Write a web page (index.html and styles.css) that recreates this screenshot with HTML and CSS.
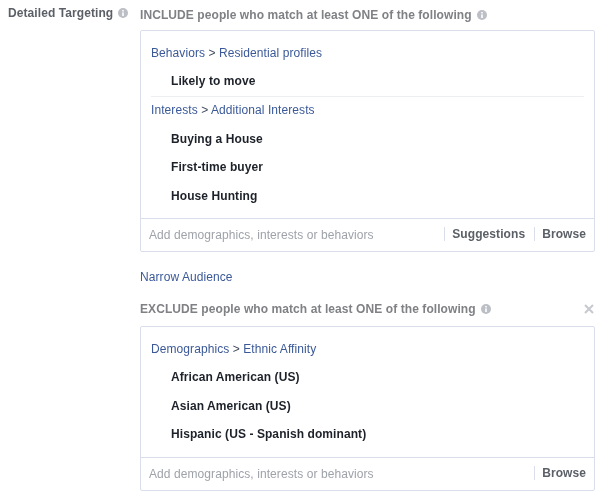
FILE: index.html
```html
<!DOCTYPE html>
<html lang="en">
<head>
  <meta charset="UTF-8">
  <title>Detailed Targeting</title>
  <link rel="stylesheet" href="styles.css">
</head>
<body>
  <div class="targeting">
    <div class="side-label">
      <span>Detailed Targeting</span>
      <svg class="info" viewBox="0 0 10 10"><circle cx="5" cy="5" r="5"/><rect x="4.2" y="4.4" width="1.6" height="3.6" fill="#fff"/><rect x="4.2" y="2" width="1.6" height="1.5" fill="#fff"/></svg>
    </div>
    <div class="main">
      <div class="heading">
        <span>INCLUDE people who match at least ONE of the following</span>
        <svg class="info" viewBox="0 0 10 10"><circle cx="5" cy="5" r="5"/><rect x="4.2" y="4.4" width="1.6" height="3.6" fill="#fff"/><rect x="4.2" y="2" width="1.6" height="1.5" fill="#fff"/></svg>
      </div>

      <div class="box">
        <div class="group short">
          <div class="path"><a>Behaviors</a> &gt; <a>Residential profiles</a></div>
          <div class="item">Likely to move</div>
        </div>
        <div class="group with-line">
          <div class="path"><a>Interests</a> &gt; <a>Additional Interests</a></div>
          <div class="item">Buying a House</div>
          <div class="item">First-time buyer</div>
          <div class="item">House Hunting</div>
        </div>
        <div class="add-row">
          <span class="placeholder">Add demographics, interests or behaviors</span>
          <span class="action">Suggestions</span>
          <span class="action">Browse</span>
        </div>
      </div>

      <a class="narrow">Narrow Audience</a>

      <div class="heading exclude">
        <span>EXCLUDE people who match at least ONE of the following</span>
        <svg class="info" viewBox="0 0 10 10"><circle cx="5" cy="5" r="5"/><rect x="4.2" y="4.4" width="1.6" height="3.6" fill="#fff"/><rect x="4.2" y="2" width="1.6" height="1.5" fill="#fff"/></svg>
        <svg class="close" viewBox="0 0 10 10"><path d="M1 1L9 9M9 1L1 9"/></svg>
      </div>

      <div class="box">
        <div class="group long">
          <div class="path"><a>Demographics</a> &gt; <a>Ethnic Affinity</a></div>
          <div class="item">African American (US)</div>
          <div class="item">Asian American (US)</div>
          <div class="item">Hispanic (US - Spanish dominant)</div>
        </div>
        <div class="add-row">
          <span class="placeholder">Add demographics, interests or behaviors</span>
          <span class="action">Browse</span>
        </div>
      </div>
    </div>
  </div>
</body>
</html>
```

FILE: styles.css
```css
body {
  margin: 0;
  background-color: #fff;
  font-family: "Liberation Sans", Arial, sans-serif;
  font-size: 12px;
  letter-spacing: 0.08px;
  color: #4e5665;
}

.targeting {
  display: flex;
  padding: 0 7px 0 8px;
  filter: blur(0.4px);
}

.side-label {
  width: 132px;
  flex-shrink: 0;
  display: flex;
  align-items: center;
  gap: 5px;
  height: 25px;
  font-weight: bold;
  color: #5b5f66;
}

.main {
  flex: 1;
}

.heading {
  display: flex;
  align-items: center;
  gap: 5px;
  height: 30px;
  padding-bottom: 1px;
  box-sizing: border-box;
  font-weight: bold;
  color: #7f8185;
}

.info {
  width: 10px;
  height: 10px;
  fill: #bcbfc5;
}

.close {
  width: 10px;
  height: 10px;
  margin-left: auto;
  margin-right: 1px;
  stroke: #c6c9ce;
  stroke-width: 2;
}

.box {
  border: 1px solid #d9deea;
  border-radius: 2px;
}

.group {
  padding: 15px 10px 0;
}

.group.with-line {
  margin: 0 10px;
  padding: 6px 0 0;
  border-top: 1px solid #eceef2;
}

.path {
  height: 15px;
  line-height: 15px;
  color: #444c5c;
}

.path a,
.narrow {
  color: #3b5998;
}

.item {
  height: 15px;
  line-height: 15px;
  margin-top: 13.5px;
  padding-left: 20px;
  font-weight: bold;
  color: #1d2129;
}

.group .item:last-child {
  margin-bottom: 14px;
}

.group.long .item:last-child {
  margin-bottom: 15px;
}

.group.short .item {
  margin-top: 12.5px;
}

.group.short .item:last-child {
  margin-bottom: 7.5px;
}

.add-row {
  display: flex;
  align-items: center;
  height: 32px;
  padding: 0 8px;
  border-top: 1px solid #d9deea;
}

.placeholder {
  flex: 1;
  color: #9ea2a9;
}

.action {
  margin-left: 9px;
  padding-left: 7px;
  border-left: 1px solid #d9deea;
  line-height: 14px;
  margin-bottom: 2px;
  font-weight: bold;
  color: #5b5f66;
}

.narrow {
  display: block;
  height: 15px;
  line-height: 15px;
  margin-top: 18px;
}

.heading.exclude {
  margin-top: 9px;
  height: 32px;
}
```
